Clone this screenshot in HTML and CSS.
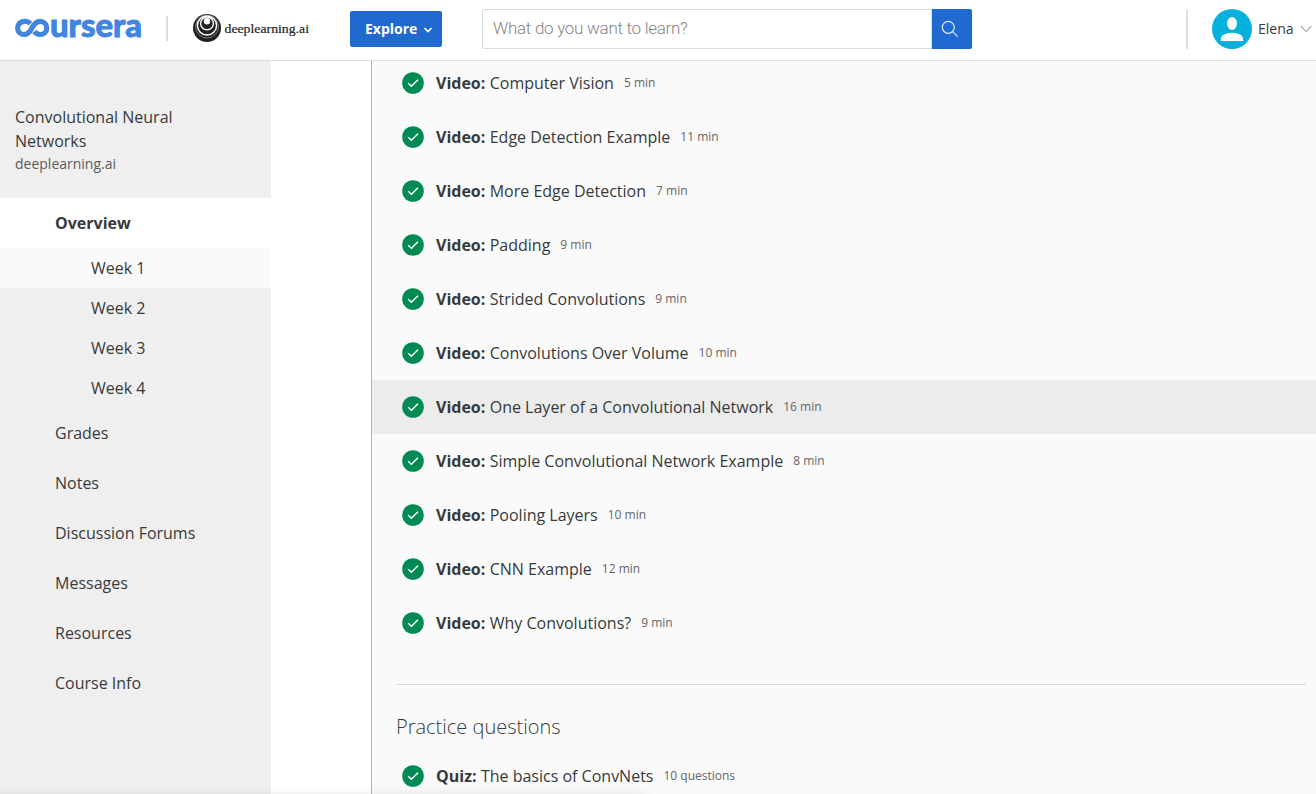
FILE: index.html
```html
<!DOCTYPE html>
<html lang="en">
<head>
<meta charset="utf-8">
<title>Convolutional Neural Networks | Coursera</title>
<link rel="stylesheet" href="styles.css">
</head>
<body>
<svg width="0" height="0" class="defs">
  <symbol id="check" viewBox="0 0 22 22"><circle cx="11" cy="11" r="10.8" fill="#028a55"/><path d="M6.200 11.200l3.200 3.100 6.600-6.600" fill="none" stroke="#fff" stroke-width="1.500"/></symbol>
</svg>
<header class="header">
  <svg class="brand" width="134" height="50" viewBox="14 4 134 50" role="img" aria-label="Coursera">
    <path d="M30.500 23.600C28.800 21.900 26.600 21.100 24.300 21.300C20.300 21.600 17.600 24.400 17.600 28C17.600 31.700 20.500 34.500 24.200 34.500C27.700 34.500 29.600 32.400 31.500 28.800C33.600 24.600 36 21.300 40 21.300C43.900 21.300 46.800 24.300 46.800 28C46.800 31.700 43.900 34.500 40.200 34.500C37.700 34.500 35.600 33.400 34.300 31.600" fill="none" stroke="#4285e0" stroke-width="5.200"/>
    <text class="wordmark" x="50" y="36.700" textLength="92" lengthAdjust="spacingAndGlyphs">ursera</text>
  </svg>
  <span class="divider divider-brand"></span>
  <svg class="partner" width="120" height="32" viewBox="192 12 120 32" role="img" aria-label="deeplearning.ai">
    <circle cx="207" cy="28" r="14" fill="#202022"/>
    <g fill="none" stroke="#fff"><circle cx="207" cy="25.500" r="9.600" stroke-width="1.500"/><circle cx="207" cy="23.500" r="6.400" stroke-width="1.400"/><circle cx="207" cy="26.500" r="11.500" stroke-width=".4"/></g>
    <circle cx="207" cy="21.300" r="3.200" fill="#fff"/>
    <text class="partner-name" x="224.500" y="32.600" textLength="84.500" lengthAdjust="spacingAndGlyphs">deeplearning.ai</text>
  </svg>
  <button class="explore">Explore<svg width="10" height="8" viewBox="0 0 10 8"><path d="M1.500 2l3.500 3.500L8.500 2" fill="none" stroke="#fff" stroke-width="1.700"/></svg></button>
  <div class="search">
    <div class="field"><span>What do you want to learn?</span></div>
    <button class="go" aria-label="Search"><svg width="18" height="18" viewBox="0 0 18 18" fill="none" stroke="#dce9fa" stroke-width="1.200"><circle cx="7.300" cy="7.300" r="6"/><path d="M11.600 11.600l5.200 5"/></svg></button>
  </div>
  <div class="account">
    <svg width="40" height="40" viewBox="0 0 40 40"><circle cx="20" cy="20" r="20" fill="#06b1de"/><ellipse cx="20" cy="14.500" rx="5" ry="6.400" fill="#fff"/><path d="M8.800 32c0-4.500 1.500-6.200 5.200-7.200 2-.6 3.800-1 6-1s4 .4 6 1c3.700 1 5.200 2.700 5.200 7.200z" fill="#fff"/></svg>
    <span class="user">Elena</span>
    <svg width="12" height="8" viewBox="0 0 12 8"><path d="M.8 1l5.200 5.500L11.200 1" fill="none" stroke="#777" stroke-width="1"/></svg>
  </div>
</header>
<div class="layout">
  <aside class="sidebar">
    <div class="course"><div class="course-name">Convolutional Neural Networks</div><div class="course-partner">deeplearning.ai</div></div>
    <nav>
      <a class="item current">Overview</a>
      <a class="week current-week">Week 1</a>
      <a class="week">Week 2</a>
      <a class="week">Week 3</a>
      <a class="week">Week 4</a>
      <a class="item">Grades</a>
      <a class="item">Notes</a>
      <a class="item">Discussion Forums</a>
      <a class="item">Messages</a>
      <a class="item">Resources</a>
      <a class="item">Course Info</a>
    </nav>
  </aside>
  <main class="content">
    <div class="row"><svg><use href="#check"/></svg><b>Video:</b><span>Computer Vision</span><small>5 min</small></div>
    <div class="row"><svg><use href="#check"/></svg><b>Video:</b><span>Edge Detection Example</span><small>11 min</small></div>
    <div class="row"><svg><use href="#check"/></svg><b>Video:</b><span>More Edge Detection</span><small>7 min</small></div>
    <div class="row"><svg><use href="#check"/></svg><b>Video:</b><span>Padding</span><small>9 min</small></div>
    <div class="row"><svg><use href="#check"/></svg><b>Video:</b><span>Strided Convolutions</span><small>9 min</small></div>
    <div class="row"><svg><use href="#check"/></svg><b>Video:</b><span>Convolutions Over Volume</span><small>10 min</small></div>
    <div class="row hovered"><svg><use href="#check"/></svg><b>Video:</b><span>One Layer of a Convolutional Network</span><small>16 min</small></div>
    <div class="row"><svg><use href="#check"/></svg><b>Video:</b><span>Simple Convolutional Network Example</span><small>8 min</small></div>
    <div class="row"><svg><use href="#check"/></svg><b>Video:</b><span>Pooling Layers</span><small>10 min</small></div>
    <div class="row"><svg><use href="#check"/></svg><b>Video:</b><span>CNN Example</span><small>12 min</small></div>
    <div class="row"><svg><use href="#check"/></svg><b>Video:</b><span>Why Convolutions?</span><small>9 min</small></div>
    <hr>
    <h2>Practice questions</h2>
    <div class="row"><svg><use href="#check"/></svg><b>Quiz:</b><span>The basics of ConvNets</span><small>10 questions</small></div>
  </main>
</div>
<div class="status-shadow"></div>
</body>
</html>
```
FILE: styles.css
```css
* { box-sizing: border-box; }
body { margin: 0; height: 794px; overflow: hidden; background: #fff; color: #373a3c; font: 16px/24px "Open Sans", sans-serif; display: flex; flex-direction: column; }
.defs { position: absolute; }
svg { display: block; flex: none; }
button { border: 0; padding: 0; background: #1f69d1; color: #fff; font-family: inherit; }
.header { height: 61px; flex: none; display: flex; align-items: flex-start; border-bottom: 1px solid #dcdcdc; background: #fff; }
.brand { margin: 4px 0 0 14px; }
.wordmark { font: 900 33px Lato, sans-serif; fill: #4285e0; stroke: #4285e0; stroke-width: .9px; }
.divider { width: 2px; background: #dedede; }
.divider-brand { height: 25px; margin: 16px 0 0 18px; }
.partner { margin: 12px 0 0 24px; }
.partner-name { font: 13px "Liberation Serif", serif; fill: #222; stroke: #222; stroke-width: .2px; }
.explore { width: 92px; height: 36px; margin: 11px 0 0 38px; padding: 0 0 1px 15px; border-radius: 2px; font-size: 14px; font-weight: 700; display: flex; align-items: center; }
.explore svg { margin: 2px 0 0 6px; }
.search { display: flex; margin: 9px 0 0 40px; width: 490px; height: 40px; }
.field { flex: 1; border: 1px solid #dcdcdc; border-radius: 2px 0 0 2px; padding: 6px 10px; font: 300 17px/24px Roboto, "Liberation Sans", sans-serif; letter-spacing: -.28px; color: #858585; white-space: nowrap; }
.go { width: 40px; height: 40px; border-radius: 0 2px 2px 0; display: flex; align-items: center; justify-content: center; padding-right: 4px; }
.account { display: flex; align-items: center; height: 40px; margin: 9px 0 0 214px; padding-left: 24px; border-left: 2px solid #dedede; font-size: 14px; }
.user { margin: 0 6px; }
.layout { display: flex; flex: 1; min-height: 0; }
.sidebar { width: 271px; flex: none; background: #efefef; }
.course { height: 137px; padding: 44px 90px 0 15px; }
.course-partner { font-size: 14px; line-height: 22px; color: #5c5c5c; }
.item, .week { display: block; }
.item { height: 50px; line-height: 50px; padding-left: 55px; }
.week { height: 40px; line-height: 40px; padding-left: 91px; }
.current { background: #fff; font-weight: 700; }
.current-week { background: #fafafa; }
.content { flex: 1; margin-left: 100px; border-left: 1px solid #b3b3b3; background: #fafafa; overflow: hidden; }
.row { height: 54px; display: flex; align-items: center; padding-left: 30px; white-space: nowrap; }
.row:first-child { height: 49px; padding-bottom: 5px; }
.row svg { width: 22px; height: 22px; margin-right: 12px; }
.row b { margin-right: 4.400px; }
.row small { margin-left: 10px; font-size: 12px; color: #666; }
.hovered { background: #ececec; }
hr { height: 1px; border: 0; background: #d9d9d9; margin: 34px 10px 0 24px; }
h2 { margin: 28px 0 8px 24px; font-size: 20px; line-height: 28px; font-weight: 300; }
.status-shadow { position: absolute; left: 0; bottom: 0; width: 655px; height: 7px; background: linear-gradient(transparent, rgba(0,0,0,.045)); -webkit-mask-image: linear-gradient(90deg, #000 97%, transparent); mask-image: linear-gradient(90deg, #000 97%, transparent); }
```
